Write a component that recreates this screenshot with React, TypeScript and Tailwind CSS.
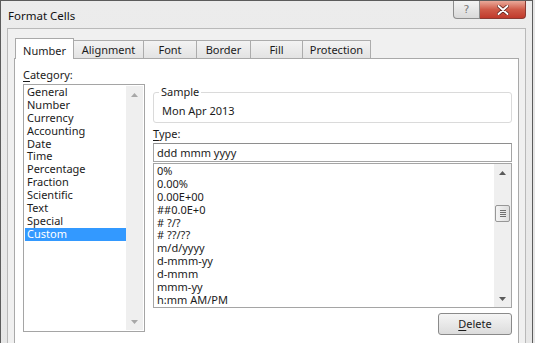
import React from "react";

const categories = [
  "General",
  "Number",
  "Currency",
  "Accounting",
  "Date",
  "Time",
  "Percentage",
  "Fraction",
  "Scientific",
  "Text",
  "Special",
  "Custom",
];

const types = [
  "0%",
  "0.00%",
  "0.00E+00",
  "##0.0E+0",
  "# ?/?",
  "# ??/??",
  "m/d/yyyy",
  "d-mmm-yy",
  "d-mmm",
  "mmm-yy",
  "h:mm AM/PM",
];

function Arrow({ up, color }: { up: boolean; color: string }) {
  return (
    <svg width="7" height="4" viewBox="0 0 7 4">
      {up ? (
        <polygon points="0,4 7,4 3.5,0" fill={color} />
      ) : (
        <polygon points="0,0 7,0 3.5,4" fill={color} />
      )}
    </svg>
  );
}

function ScrollBar({ enabled }: { enabled: boolean }) {
  const c = enabled ? "#5a5a5a" : "#a8a8a8";
  return (
    <div className="w-[17px] flex flex-col bg-[#efefef] shrink-0">
      <div className="h-[17px] flex items-center justify-center">
        <Arrow up color={c} />
      </div>
      <div className="flex-1 flex flex-col items-center">
        {enabled && (
          <div className="mt-[24px] w-[15px] h-[17px] rounded-[2px] border border-[#979797] bg-gradient-to-r from-[#f4f4f4] to-[#dedede] flex flex-col items-center justify-center gap-[1px]">
            <div className="w-[6px] h-px bg-[#6e6e6e]" />
            <div className="w-[6px] h-px bg-[#6e6e6e]" />
            <div className="w-[6px] h-px bg-[#6e6e6e]" />
            <div className="w-[6px] h-px bg-[#6e6e6e]" />
          </div>
        )}
      </div>
      <div className="h-[17px] flex items-center justify-center">
        <Arrow up={false} color={c} />
      </div>
    </div>
  );
}

const tabs = [
  { label: "Alignment", w: "w-[71px]" },
  { label: "Font", w: "w-[54px]" },
  { label: "Border", w: "w-[55px]" },
  { label: "Fill", w: "w-[53px]" },
  { label: "Protection", w: "w-[69px]" },
];

export default function App() {
  return (
    <div className="w-[535px] h-[343px] overflow-hidden bg-[#e6e6e6] font-['Noto_Sans',sans-serif] text-[#1b1b1b] text-[11px]">
      <div className="w-[533px] h-[380px] border-l border-t border-r border-[#5c5c5c] bg-gradient-to-b from-[#ececec] to-[#e6e6e6] flex flex-col">
        {/* title bar */}
        <div className="h-[27px] flex items-start justify-between shrink-0">
          <div className="pl-[7px] pt-[7px] text-[11.5px] leading-[16px] text-[#111]">
            Format Cells
          </div>
          <div className="flex mr-[6px]">
            <div className="w-[27px] h-[18px] rounded-bl-[4px] border border-t-0 border-[#8d8d8d] bg-gradient-to-b from-[#f4f4f4] to-[#d9d9d9] flex items-center justify-center text-[11px] leading-none text-[#7a7a7a] font-['DejaVu_Sans',sans-serif]">
              ?
            </div>
            <div className="w-[46px] h-[18px] rounded-br-[4px] border border-t-0 border-l-0 border-[#8a3a32] bg-gradient-to-b from-[#e9a99a] via-[#cf5a48] to-[#c0392b] flex items-center justify-center">
              <svg width="12" height="10" viewBox="0 0 12 10">
                <path
                  d="M1.5 1 L10.5 9 M10.5 1 L1.5 9"
                  stroke="#5a1e18"
                  strokeWidth="3.4"
                  strokeLinecap="round"
                />
                <path
                  d="M1.5 1 L10.5 9 M10.5 1 L1.5 9"
                  stroke="#ffffff"
                  strokeWidth="1.9"
                  strokeLinecap="round"
                />
              </svg>
            </div>
          </div>
        </div>

        {/* client area */}
        <div className="mx-[6px] flex-1 border border-[#b9b9b9] bg-[#f0f0f0] px-[6px] pt-[8px] flex flex-col">
          {/* tabs */}
          <div className="flex items-end h-[21px] pl-[1px] shrink-0">
            <div className="relative z-10 w-[59px] h-[21px] -mb-px border border-b-0 border-[#a9a9a9] bg-white flex items-center justify-center pt-[4px]">
              Number
            </div>
            {tabs.map((t) => (
              <div
                key={t.label}
                className={`${t.w} h-[18px] -ml-px border border-b-0 border-[#acacac] bg-gradient-to-b from-[#f3f3f3] to-[#e3e3e3] flex items-center justify-center pt-[2px]`}
              >
                {t.label}
              </div>
            ))}
          </div>

          {/* tab page */}
          <div className="flex-1 border border-[#a9a9a9] bg-white pl-[8px] pr-[6px] pt-[8px] flex gap-[8px]">
            {/* category column */}
            <div className="w-[122px] flex flex-col shrink-0">
              <div className="h-[17px] leading-[16px]">
                <span className="underline underline-offset-2">C</span>ategory:
              </div>
              <div className="h-[248px] border border-[#a5a5a5] flex p-px">
                <div className="flex-1 flex flex-col">
                  {categories.map((c) => (
                    <div
                      key={c}
                      className={`h-[12.9px] leading-[12.9px] pl-[2px] ${
                        c === "Custom" ? "bg-[#3399ff] text-white" : ""
                      }`}
                    >
                      {c}
                    </div>
                  ))}
                </div>
                <ScrollBar enabled={false} />
              </div>
            </div>

            {/* right column */}
            <div className="w-[360px] flex flex-col pt-[18px]">
              <fieldset className="h-[38px] border border-[#dadada] rounded-[3px] px-[8px]">
                <legend className="px-[2px] -ml-[3px] leading-[14px]">Sample</legend>
                <div className="pt-[5px] leading-[14px]">Mon Apr 2013</div>
              </fieldset>
              <div className="mt-[3px] h-[16px] leading-[16px]">
                <span className="underline underline-offset-2">T</span>ype:
              </div>
              <div className="mt-[1px] h-[19px] border border-[#a5a5a5] border-t-[#8e8e8e] px-[3px] leading-[17px]">
                ddd mmm yyyy
              </div>
              <div className="mt-px h-[145px] border border-[#a5a5a5] flex">
                <div className="flex-1 pl-[3px] pt-[1px]">
                  {types.map((t) => (
                    <div key={t} className="h-[12.9px] leading-[12.9px]">
                      {t}
                    </div>
                  ))}
                </div>
                <ScrollBar enabled />
              </div>
              <div className="mt-[5px] flex justify-end">
                <div className="w-[74px] h-[22px] rounded-[3px] border border-[#8a8a8a] bg-gradient-to-b from-[#f5f5f5] to-[#dcdcdc] flex items-center justify-center">
                  <span>
                    <span className="underline underline-offset-2">D</span>elete
                  </span>
                </div>
              </div>
            </div>
          </div>
        </div>
      </div>
    </div>
  );
}
